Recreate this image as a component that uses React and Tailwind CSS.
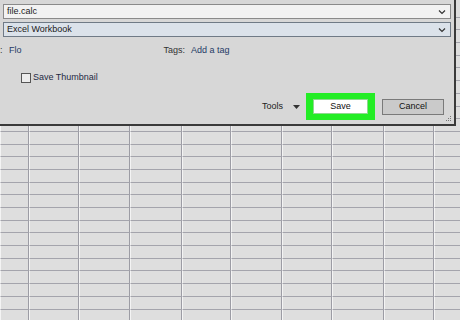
import React from 'react';

const COLS = [29, 50, 51, 52, 49, 51, 50, 52, 50, 40];
const ROWS = 26;

function Chevron() {
  return (
    <svg width="8" height="6" viewBox="0 0 8 6" className="shrink-0">
      <path d="M1 1.5 L4 4.5 L7 1.5" fill="none" stroke="#333" strokeWidth="1.2" />
    </svg>
  );
}

function Sheet() {
  return (
    <div className="flex flex-col pt-[5px]">
      {Array.from({ length: ROWS }).map((_, r) => (
        <div key={r} className="flex h-[12.7px] shrink-0">
          {COLS.map((w, c) => (
            <div
              key={c}
              style={{ width: w }}
              className="shrink-0 bg-[#dedede] border-b border-b-[#a4a4ac] border-r border-r-[#9c9ca4] border-l border-l-[#f4f4f4]"
            />
          ))}
        </div>
      ))}
    </div>
  );
}

export default function App() {
  return (
    <div className="relative w-[460px] h-[320px] overflow-hidden bg-[#dedede] font-['Liberation_Sans',Arial,sans-serif] text-[9px] text-[#1b1b1b]">
      <Sheet />

      <div className="absolute left-0 top-0 w-[456px] h-[126px] bg-[#d7d7d7] border-r-2 border-b-2 border-[#3a3a3a] flex flex-col">
        <div className="ml-[3px] mr-[3px] mt-[4px] h-[15px] flex items-center justify-between pl-[3px] pr-[4px] bg-[#f2f2f2] border border-[#8a8a8a]">
          <span>file.calc</span>
          <Chevron />
        </div>
        <div className="ml-[3px] mr-[3px] mt-[3px] h-[15px] flex items-center justify-between pl-[3px] pr-[4px] bg-[#dbe2ea] border border-[#6f7a86]">
          <span>Excel Workbook</span>
          <Chevron />
        </div>

        <div className="flex items-center mt-[8px] h-[12px]">
          <span className="w-[9px] text-[#333]">:</span>
          <span className="text-[#1f3a66]">Flo</span>
          <span className="ml-[142px] text-[#333]">Tags:</span>
          <span className="ml-[6px] text-[#1f3a66]">Add a tag</span>
        </div>

        <div className="flex items-center ml-[21px] mt-[14px] gap-[2px]">
          <div className="w-[10px] h-[10px] border border-[#555] bg-[#ececec]" />
          <span className="text-[#1f2a44]">Save Thumbnail</span>
        </div>

        <div className="flex-1" />

        <div className="flex items-center justify-end pr-[10px] pb-[4px]">
          <span className="text-[#222]">Tools</span>
          <svg width="7" height="4" viewBox="0 0 7 4" className="ml-[10px] mr-[6px]">
            <path d="M0 0 H7 L3.5 4 Z" fill="#333" />
          </svg>
          <div className="w-[69px] h-[27px] bg-[#23ed25] flex items-center justify-center">
            <div className="w-[55px] h-[15px] bg-white border border-[#8fd88f] flex items-center justify-center text-[#111]">
              Save
            </div>
          </div>
          <div className="ml-[7px] w-[62px] h-[16px] bg-[#cacaca] border border-[#7a7a7a] flex items-center justify-center text-[#111]">
            Cancel
          </div>
        </div>

        <svg width="6" height="6" viewBox="0 0 6 6" className="absolute right-[2px] bottom-[2px]">
          <rect x="4" y="0" width="1" height="1" fill="#777" />
          <rect x="2" y="2" width="1" height="1" fill="#777" />
          <rect x="4" y="2" width="1" height="1" fill="#777" />
          <rect x="0" y="4" width="1" height="1" fill="#777" />
          <rect x="2" y="4" width="1" height="1" fill="#777" />
          <rect x="4" y="4" width="1" height="1" fill="#777" />
        </svg>
      </div>
    </div>
  );
}
